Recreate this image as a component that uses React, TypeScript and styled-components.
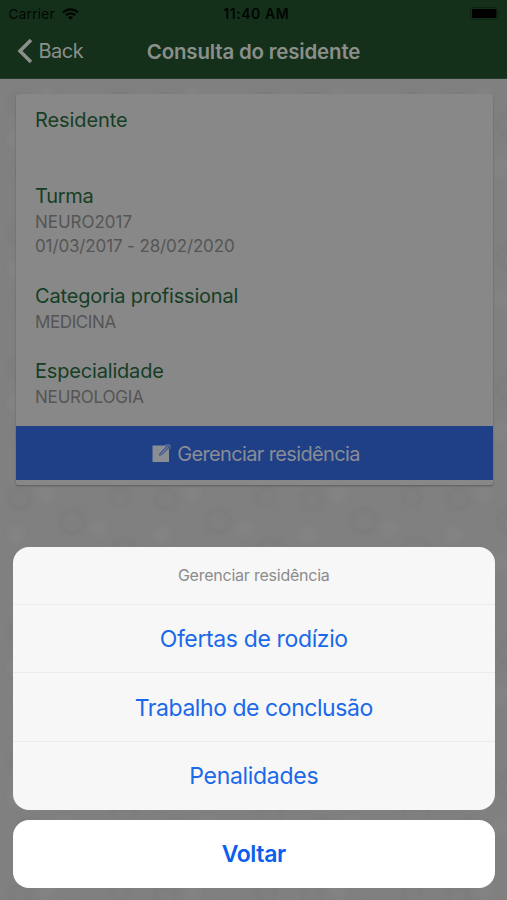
import React from 'react';
import styled, { createGlobalStyle } from 'styled-components';

const GlobalStyle = createGlobalStyle`
  * { box-sizing: border-box; }
  html, body, #root { margin: 0; height: 100%; }
  body { overflow: hidden; font-family: Inter, sans-serif; background: #808080; }
  button { font-family: inherit; border: 0; margin: 0; padding: 0; background: none; }
`;

const Screen = styled.div`
  position: relative;
  height: 900px;
  width: 507px;
  display: flex;
  flex-direction: column;
  overflow: hidden;
  background: #808080;
`;

const Header = styled.header`
  height: 79px;
  flex: none;
  background: #14301a;
  border-bottom: 1px solid #243b29;
`;

const StatusBar = styled.div`
  height: 27px;
  display: grid;
  grid-template-columns: 1fr auto 1fr;
  align-items: center;
  padding: 0 5px 0 8.5px;
  color: #020603;
  font-size: 13.5px;
`;

const Carrier = styled.div`
  display: flex;
  align-items: center;
  gap: 7px;
  letter-spacing: 0.31px;
`;

const Clock = styled.div`
  padding-left: 2px;
  font-weight: 600;
  font-size: 14px;
  letter-spacing: 0.55px;
`;

const Battery = styled.svg`
  justify-self: end;
`;

const NavBar = styled.div`
  height: 48px;
  display: grid;
  grid-template-columns: 1fr auto 1fr;
  align-items: center;
  padding: 0 16.5px;
  color: #8a8f8b;
`;

const BackButton = styled.button`
  display: flex;
  align-items: center;
  gap: 6px;
  color: inherit;
  font-size: 20px;
  letter-spacing: -0.5px;
`;

const Title = styled.h1`
  margin: 0;
  font-size: 20.5px;
  font-weight: 600;
  letter-spacing: -0.19px;
`;

const Content = styled.main`
  position: relative;
  flex: 1;
  padding: 15px 14.5px 0 15.5px;
`;

const Texture = styled.svg`
  position: absolute;
  inset: 0;
  width: 100%;
  height: 100%;
`;

const Card = styled.section`
  position: relative;
  height: 391px;
  display: flex;
  flex-direction: column;
  justify-content: space-between;
  padding-bottom: 5px;
  border-radius: 2px;
  background: #888888;
  box-shadow: 0 1px 2px rgba(0, 0, 0, 0.3);
`;

const Details = styled.div`
  display: flex;
  flex-direction: column;
  gap: 24px;
  padding: 13px 19.5px 0;
`;

const Detail = styled.div`
  min-height: 51.5px;
`;

const Label = styled.div<{ $tracking: number }>`
  font-size: 20px;
  line-height: 27px;
  letter-spacing: ${(p) => p.$tracking}px;
  color: #163e25;
`;

const Value = styled.div<{ $tracking: number }>`
  font-size: 17px;
  line-height: 24.5px;
  letter-spacing: ${(p) => p.$tracking}px;
  color: #555555;
`;

const ManageButton = styled.button`
  height: 54.5px;
  display: flex;
  align-items: center;
  justify-content: center;
  gap: 6px;
  padding: 2px 0 0 4px;
  background: #1f3f87;
  color: #898d94;
  font-size: 20px;
  letter-spacing: -0.64px;
`;

const ActionSheet = styled.div`
  position: absolute;
  left: 13px;
  right: 12.5px;
  bottom: 12.5px;
  display: flex;
  flex-direction: column;
  gap: 10px;
`;

const SheetGroup = styled.div`
  height: 263px;
  display: flex;
  flex-direction: column;
  border-radius: 16px;
  overflow: hidden;
  background: #f7f7f7;
`;

const SheetTitle = styled.div`
  height: 57px;
  display: flex;
  align-items: center;
  justify-content: center;
  color: #8c8c8c;
  font-size: 16px;
  letter-spacing: -0.23px;
`;

const SheetAction = styled.button<{ $tracking: number }>`
  flex: 1;
  padding-top: 1px;
  border-top: 1px solid #ececec;
  color: #1a69ea;
  font-size: 23px;
  letter-spacing: ${(p) => p.$tracking}px;
`;

const CancelButton = styled.button`
  height: 68px;
  border-radius: 16px;
  background: #ffffff;
  color: #0b5fec;
  font-size: 23px;
  font-weight: 600;
  letter-spacing: -0.35px;
`;

const details = [
  { label: 'Residente', tracking: -0.1, values: [] },
  {
    label: 'Turma',
    tracking: -0.25,
    values: [
      { text: 'NEURO2017', tracking: -0.02 },
      { text: '01/03/2017 - 28/02/2020', tracking: -0.13 },
    ],
  },
  { label: 'Categoria profissional', tracking: -0.18, values: [{ text: 'MEDICINA', tracking: -0.4 }] },
  { label: 'Especialidade', tracking: -0.18, values: [{ text: 'NEUROLOGIA', tracking: -0.2 }] },
];

const actions = [
  { text: 'Ofertas de rodízio', tracking: -0.37 },
  { text: 'Trabalho de conclusão', tracking: -0.45 },
  { text: 'Penalidades', tracking: -0.3 },
];

function WifiIcon() {
  return (
    <svg width="17" height="12" viewBox="0 0 17 12" fill="none" stroke="currentColor" strokeWidth="2.2">
      <path d="M1 4.5C5.2 .4 11.8 .4 16 4.5" />
      <path d="M3.9 7.3C6.5 4.8 10.5 4.8 13.1 7.3" />
      <path d="M8.5 11.8L5.8 9.2C7.4 7.9 9.6 7.9 11.2 9.2Z" fill="currentColor" stroke="none" />
    </svg>
  );
}

function EditIcon() {
  return (
    <svg width="19" height="19" viewBox="0 0 19 19">
      <path d="M.5 1.5H17V18H.5Z" fill="currentColor" />
      <path d="M7 11.8L7.6 9.2L15 1.5H17V4.2L9.6 11.3Z" fill="#3c538b" />
      <path d="M8.6 10.3L16 2.8" stroke="#75809a" strokeWidth="1.1" />
      <path d="M13.5 1H18V5" fill="none" stroke="#6d7894" strokeWidth="1" />
    </svg>
  );
}

function Background() {
  return (
    <Texture aria-hidden="true">
      <defs>
        <filter id="soften">
          <feGaussianBlur stdDeviation="2" />
        </filter>
        <pattern id="leaves" width="146" height="132" patternUnits="userSpaceOnUse">
          <g filter="url(#soften)">
            <g fill="none" stroke="#777777" strokeWidth="4" opacity=".35">
              <circle cx="20" cy="24" r="10" />
              <circle cx="72" cy="46" r="12" />
              <circle cx="120" cy="22" r="9" />
              <circle cx="30" cy="92" r="13" />
              <circle cx="92" cy="106" r="11" />
              <circle cx="124" cy="76" r="12" />
            </g>
            <g fill="#868686" opacity=".6">
              <circle cx="46" cy="18" r="9" />
              <circle cx="98" cy="54" r="8" />
              <circle cx="62" cy="88" r="10" />
              <circle cx="16" cy="60" r="9" />
            </g>
          </g>
        </pattern>
      </defs>
      <rect width="100%" height="100%" fill="url(#leaves)" />
    </Texture>
  );
}

export default function App() {
  return (
    <>
      <GlobalStyle />
      <Screen>
        <Header>
          <StatusBar>
            <Carrier>
              Carrier
              <WifiIcon />
            </Carrier>
            <Clock>11:40 AM</Clock>
            <Battery width="32" height="13" viewBox="0 0 32 13">
              <rect x=".5" y=".5" width="27.5" height="12" rx="2.5" fill="none" stroke="#0e2413" />
              <rect x="2" y="2" width="24.5" height="9" rx="1" fill="#000" />
              <path d="M29.5 4.3Q31 6.5 29.5 8.7Z" fill="#0a1d0f" />
            </Battery>
          </StatusBar>
          <NavBar>
            <BackButton>
              <svg width="16" height="26" viewBox="0 0 16 26" fill="none" stroke="currentColor" strokeWidth="3.6">
                <path d="M14 2L3 13L14 24" />
              </svg>
              Back
            </BackButton>
            <Title>Consulta do residente</Title>
          </NavBar>
        </Header>
        <Content>
          <Background />
          <Card>
            <Details>
              {details.map((d) => (
                <Detail key={d.label}>
                  <Label $tracking={d.tracking}>{d.label}</Label>
                  {d.values.map((v) => (
                    <Value key={v.text} $tracking={v.tracking}>
                      {v.text}
                    </Value>
                  ))}
                </Detail>
              ))}
            </Details>
            <ManageButton>
              <EditIcon />
              Gerenciar residência
            </ManageButton>
          </Card>
        </Content>
        <ActionSheet>
          <SheetGroup>
            <SheetTitle>Gerenciar residência</SheetTitle>
            {actions.map((a) => (
              <SheetAction key={a.text} $tracking={a.tracking}>
                {a.text}
              </SheetAction>
            ))}
          </SheetGroup>
          <CancelButton>Voltar</CancelButton>
        </ActionSheet>
      </Screen>
    </>
  );
}
